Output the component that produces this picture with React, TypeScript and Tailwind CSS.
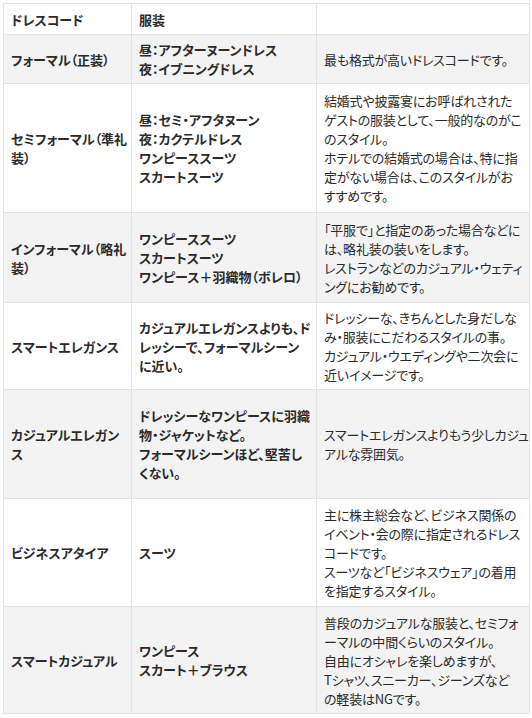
const rows: { code: string[]; wear: string[]; note: string[]; h: string; gray: boolean }[] = [
  {
    code: ["フォーマル（正装）"],
    wear: ["昼：アフターヌーンドレス", "夜：イブニングドレス"],
    note: ["最も格式が高いドレスコードです。"],
    h: "h-[49px]",
    gray: true,
  },
  {
    code: ["セミフォーマル（準礼", "装）"],
    wear: ["昼：セミ・アフタヌーン", "夜：カクテルドレス", "ワンピーススーツ", "スカートスーツ"],
    note: [
      "結婚式や披露宴にお呼ばれされた",
      "ゲストの服装として、一般的なのがこ",
      "のスタイル。",
      "ホテルでの結婚式の場合は、特に指",
      "定がない場合は、このスタイルがお",
      "すすめです。",
    ],
    h: "h-[129px]",
    gray: false,
  },
  {
    code: ["インフォーマル（略礼", "装）"],
    wear: ["ワンピーススーツ", "スカートスーツ", "ワンピース＋羽織物（ボレロ）"],
    note: [
      "「平服で」と指定のあった場合などに",
      "は、略礼装の装いをします。",
      "レストランなどのカジュアル・ウェティ",
      "ングにお勧めです。",
    ],
    h: "h-[90px]",
    gray: true,
  },
  {
    code: ["スマートエレガンス"],
    wear: ["カジュアルエレガンスよりも、ド", "レッシーで、フォーマルシーン", "に近い。"],
    note: [
      "ドレッシーな、きちんとした身だしな",
      "み・服装にこだわるスタイルの事。",
      "カジュアル・ウエディングや二次会に",
      "近いイメージです。",
    ],
    h: "h-[87px]",
    gray: false,
  },
  {
    code: ["カジュアルエレガン", "ス"],
    wear: ["ドレッシーなワンピースに羽織", "物・ジャケットなど。", "フォーマルシーンほど、堅苦し", "くない。"],
    note: ["スマートエレガンスよりもう少しカジュ", "アルな雰囲気。"],
    h: "h-[109px]",
    gray: true,
  },
  {
    code: ["ビジネスアタイア"],
    wear: ["スーツ"],
    note: [
      "主に株主総会など、ビジネス関係の",
      "イベント・会の際に指定されるドレス",
      "コードです。",
      "スーツなど「ビジネスウェア」の着用",
      "を指定するスタイル。",
    ],
    h: "h-[108px]",
    gray: false,
  },
  {
    code: ["スマートカジュアル"],
    wear: ["ワンピース", "スカート＋ブラウス"],
    note: [
      "普段のカジュアルな服装と、セミフォ",
      "ーマルの中間くらいのスタイル。",
      "自由にオシャレを楽しめますが、",
      "Tシャツ、スニーカー、ジーンズなど",
      "の軽装はNGです。",
    ],
    h: "h-[107px]",
    gray: true,
  },
];

const Lines = ({ lines }: { lines: string[] }) => (
  <>
    {lines.map((l, i) => (
      <div key={i} className="whitespace-nowrap">
        {l}
      </div>
    ))}
  </>
);

export default function App() {
  return (
    <div className="bg-white p-[3px] w-[532px] h-[718px] text-[13px] leading-[19px] text-[#2b2b2b] [font-family:'Noto_Sans_CJK_JP',sans-serif] [font-feature-settings:'palt']">
      <table className="w-[526px] border-collapse table-fixed">
        <colgroup>
          <col className="w-[128px]" />
          <col className="w-[185px]" />
          <col className="w-[213px]" />
        </colgroup>
        <thead>
          <tr className="h-[31px] bg-white">
            <th className="border border-[#e3e3e3] px-[7px] text-left font-bold align-middle">ドレスコード</th>
            <th className="border border-[#e3e3e3] px-[7px] text-left font-bold align-middle">服装</th>
            <th className="border border-[#e3e3e3] px-[7px]"></th>
          </tr>
        </thead>
        <tbody>
          {rows.map((r, i) => (
            <tr key={i} className={`${r.h} ${r.gray ? "bg-[#f3f3f3]" : "bg-white"}`}>
              <td className="border border-[#e3e3e3] px-[7px] align-middle font-bold">
                <Lines lines={r.code} />
              </td>
              <td className="border border-[#e3e3e3] px-[7px] align-middle font-bold">
                <Lines lines={r.wear} />
              </td>
              <td className="border border-[#e3e3e3] px-[7px] align-middle tracking-[-0.2px]">
                <Lines lines={r.note} />
              </td>
            </tr>
          ))}
        </tbody>
      </table>
    </div>
  );
}
